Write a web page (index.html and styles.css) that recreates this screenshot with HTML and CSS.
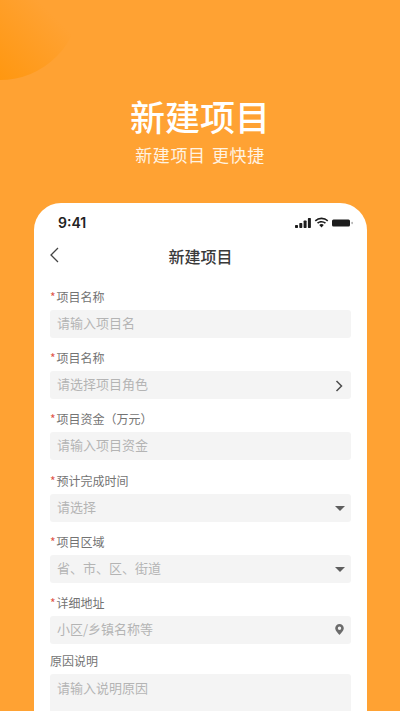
FILE: index.html
```html
<!DOCTYPE html>
<html lang="zh-CN">
<head>
<meta charset="utf-8">
<title>新建项目</title>
<link rel="stylesheet" href="styles.css">
</head>
<body>
<div class="page">
  <div class="corner"></div>
  <header class="hero">
    <h1 class="hero-title">新建项目</h1>
    <p class="hero-sub">新建项目 更快捷</p>
  </header>
  <section class="card">
    <div class="status">
      <span class="time">9:41</span>
      <span class="status-icons">
        <svg width="16" height="10" viewBox="0 0 16 10"><rect x="0" y="7" width="3" height="3" rx=".7"/><rect x="4.3" y="5" width="3" height="5" rx=".7"/><rect x="8.6" y="2.5" width="3" height="7.5" rx=".7"/><rect x="12.9" y="0" width="3" height="10" rx=".7"/></svg>
        <svg width="15" height="11" viewBox="0 0 14 10"><path d="M7 2c2 0 3.9.8 5.3 2.1l1-1.1A9.2 9.2 0 0 0 7 .4 9.2 9.2 0 0 0 .7 3l1 1.1A7.7 7.7 0 0 1 7 2z"/><path d="M7 5c1.2 0 2.3.4 3.2 1.2l1-1.1A6.300 6.300 0 0 0 7 3.500c-1.600 0-3.100.6-4.200 1.600l1 1.100C4.700 5.400 5.800 5 7 5z"/><path d="M7 6.500c-.8 0-1.500.3-2.100.8L7 9.700l2.100-2.400c-.6-.5-1.300-.8-2.100-.8z"/></svg>
        <svg class="battery" width="21" height="10" viewBox="0 0 21 10"><rect x="0" y="1.500" width="18" height="7" rx="1.500"/><rect x="19.500" y="3.800" width="1.200" height="2.400" rx=".6" opacity=".45"/></svg>
      </span>
    </div>
    <div class="nav">
      <svg class="back" width="10" height="16" viewBox="0 0 10 16"><path d="M9 1 2 8l7 7"/></svg>
      <h2 class="nav-title">新建项目</h2>
    </div>
    <form class="form">
      <div class="field">
        <div class="label"><i class="req">*</i>项目名称</div>
        <div class="input"><span class="hint">请输入项目名</span></div>
      </div>
      <div class="field">
        <div class="label"><i class="req">*</i>项目名称</div>
        <div class="input"><span class="hint">请选择项目角色</span>
          <svg class="chev" width="8" height="12" viewBox="0 0 8 12"><path d="M1.500 1 6.500 6l-5 5"/></svg>
        </div>
      </div>
      <div class="field">
        <div class="label"><i class="req">*</i>项目资金（万元）</div>
        <div class="input"><span class="hint">请输入项目资金</span></div>
      </div>
      <div class="field">
        <div class="label"><i class="req">*</i>预计完成时间</div>
        <div class="input"><span class="hint">请选择</span><i class="caret"></i></div>
      </div>
      <div class="field">
        <div class="label"><i class="req">*</i>项目区域</div>
        <div class="input"><span class="hint">省、市、区、街道</span><i class="caret"></i></div>
      </div>
      <div class="field">
        <div class="label"><i class="req">*</i>详细地址</div>
        <div class="input"><span class="hint">小区/乡镇名称等</span>
          <svg class="pin" width="9" height="11" viewBox="0 0 9 11"><path fill-rule="evenodd" d="M4.500 0A4.300 4.300 0 0 0 .2 4.300C.2 7 4.500 11 4.500 11s4.300-4 4.300-6.700A4.300 4.300 0 0 0 4.500 0zm0 5.900a1.700 1.700 0 1 1 0-3.400 1.700 1.700 0 0 1 0 3.400z"/></svg>
        </div>
      </div>
      <div class="field field-last">
        <div class="label">原因说明</div>
        <div class="input input-area"><span class="hint">请输入说明原因</span></div>
      </div>
    </form>
  </section>
</div>
</body>
</html>
```
FILE: styles.css
```css
* { box-sizing: border-box; }
html, body { margin: 0; padding: 0; }
body {
  width: 400px;
  height: 711px;
  overflow: hidden;
  font-family: "Noto Sans CJK SC", "Noto Sans", sans-serif;
}
.page {
  position: relative;
  width: 400px;
  height: 711px;
  overflow: hidden;
  background: #ffa233;
  display: flex;
  flex-direction: column;
}
.corner {
  position: absolute;
  left: -80px;
  top: -80px;
  width: 160px;
  height: 160px;
  border-radius: 50%;
  background: linear-gradient(45deg, #ff9406 14%, #ffa233 62%);
}
.hero {
  position: relative;
  height: 203px;
  padding-top: 93px;
  text-align: center;
  color: #fff;
}
.hero-title {
  margin: 0;
  font-size: 35px;
  line-height: 46px;
  font-weight: 500;
}
.hero-sub {
  margin: 5px 0 0;
  font-size: 17px;
  line-height: 22px;
  letter-spacing: .6px;
  word-spacing: 2px;
  color: #fff3e2;
}
.card {
  position: relative;
  flex: 1;
  width: 333px;
  margin-left: 34px;
  background: #fff;
  border-radius: 27px 27px 0 0;
  overflow: hidden;
  padding: 0 16px;
}
.status {
  height: 37px;
  padding: 2px 0 0 8px;
  display: flex;
  align-items: center;
  justify-content: space-between;
}
.time {
  font-family: "Inter", "Liberation Sans", sans-serif;
  font-size: 14px;
  font-weight: 600;
  color: #222;
}
.status-icons {
  display: flex;
  align-items: center;
  gap: 3px;
  margin-right: -2px;
}
.status-icons svg { display: block; fill: #1c1c1c; }
.nav {
  position: relative;
  height: 32px;
  display: flex;
  align-items: center;
  justify-content: center;
}
.back {
  position: absolute;
  left: -1px;
  top: 7px;
  fill: none;
  stroke: #444;
  stroke-width: 1.300;
}
.nav-title {
  margin: 0;
  font-size: 16px;
  line-height: 22px;
  font-weight: 500;
  color: #3a3a3a;
}
.form {
  margin-top: 17px;
  display: flex;
  flex-direction: column;
  gap: 12.2px;
}
.field {
  display: flex;
  flex-direction: column;
  gap: 5px;
}
.field-last { margin-top: -3px; }
.label {
  font-size: 12px;
  line-height: 16px;
  height: 16px;
  color: #737373;
}
.req {
  font-style: normal;
  color: #e0564a;
  margin-right: 1px;
}
.input {
  height: 28px;
  width: 301px;
  background: #f4f4f4;
  border-radius: 3px;
  padding: 0 7px;
  display: flex;
  align-items: center;
  justify-content: space-between;
  font-size: 13px;
  color: #b4b4b4;
}
.hint { margin-bottom: 3px; }
.input-area {
  height: 60px;
  align-items: flex-start;
  padding-top: 4px;
}
.chev {
  fill: none;
  stroke: #4d4d4d;
  stroke-width: 1.500;
  margin-right: 1px;
  margin-top: 1px;
}
.caret {
  width: 0;
  height: 0;
  margin-right: -1px;
  margin-top: 1px;
  border-left: 5px solid transparent;
  border-right: 5px solid transparent;
  border-top: 5px solid #5e5e5e;
}
.pin { fill: #6c6c6c; margin-right: 0; }
```
